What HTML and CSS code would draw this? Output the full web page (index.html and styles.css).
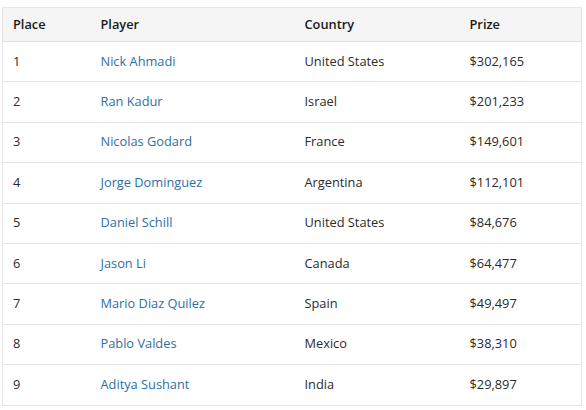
FILE: index.html
```html
<!DOCTYPE html>
<html>
<head>
<meta charset="utf-8">
<link rel="stylesheet" href="styles.css">
</head>
<body>
<div class="wrap">
<table class="results">
  <colgroup>
    <col class="c-place"><col class="c-player"><col class="c-country"><col class="c-prize">
  </colgroup>
  <thead>
    <tr><th>Place</th><th>Player</th><th>Country</th><th>Prize</th></tr>
  </thead>
  <tbody>
    <tr><td>1</td><td><a href="#">Nick Ahmadi</a></td><td>United States</td><td>$302,165</td></tr>
    <tr><td>2</td><td><a href="#">Ran Kadur</a></td><td>Israel</td><td>$201,233</td></tr>
    <tr><td>3</td><td><a href="#">Nicolas Godard</a></td><td>France</td><td>$149,601</td></tr>
    <tr><td>4</td><td><a href="#">Jorge Dominguez</a></td><td>Argentina</td><td>$112,101</td></tr>
    <tr><td>5</td><td><a href="#">Daniel Schill</a></td><td>United States</td><td>$84,676</td></tr>
    <tr><td>6</td><td><a href="#">Jason Li</a></td><td>Canada</td><td>$64,477</td></tr>
    <tr><td>7</td><td><a href="#">Mario Diaz Quilez</a></td><td>Spain</td><td>$49,497</td></tr>
    <tr><td>8</td><td><a href="#">Pablo Valdes</a></td><td>Mexico</td><td>$38,310</td></tr>
    <tr><td>9</td><td><a href="#">Aditya Sushant</a></td><td>India</td><td>$29,897</td></tr>
  </tbody>
</table>
</div>
</body>
</html>
```
FILE: styles.css
```css
html, body {
  margin: 0;
  padding: 0;
  background: #ffffff;
}
body {
  font-family: "Open Sans", "Noto Sans", sans-serif;
  font-size: 12.8px;
  color: #222222;
}
.wrap {
  padding: 7px 5px 0 2px;
}
.results {
  width: 579px;
  table-layout: fixed;
  border-collapse: collapse;
  border: 1px solid #e6e6e6;
}
.c-place { width: 88px; }
.c-player { width: 204px; }
.c-country { width: 165px; }
.c-prize { width: 122px; }
.results th {
  background: #f5f5f5;
  font-weight: 600;
  text-align: left;
  height: 31px;
  padding: 0 10px 2px;
  color: #1a1a1a;
}
.results td {
  height: 37.4px;
  padding: 0 10px 2px;
  border-top: 1px solid #e3e3e3;
  color: #2b2b2b;
}
.results a {
  color: #2d6fa6;
  text-decoration: none;
}
```
